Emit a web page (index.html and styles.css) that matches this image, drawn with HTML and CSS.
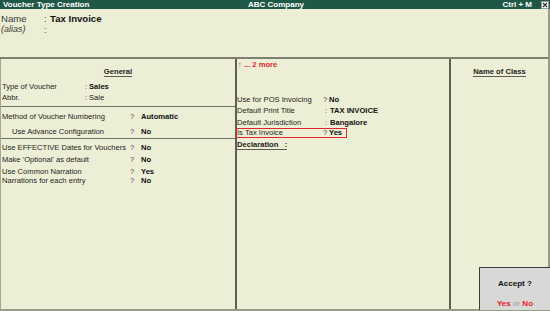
FILE: index.html
```html
<!DOCTYPE html>
<html>
<head>
<meta charset="utf-8">
<link rel="stylesheet" href="styles.css">
</head>
<body>
<div class="app">
  <div class="titlebar">
    <span class="tb-left">Voucher Type Creation</span>
    <span class="tb-center">ABC Company</span>
    <span class="tb-right">Ctrl + M
      <svg class="close" width="8" height="8" viewBox="0 0 8 8">
        <rect x="0.5" y="0.5" width="7" height="7" fill="#f4f4f4" stroke="#9a9a9a"/>
        <path d="M2 2 L6 6 M6 2 L2 6" stroke="#333" stroke-width="1.1"/>
      </svg>
    </span>
  </div>

  <div class="header">
    <div class="hrow"><span class="hlabel">Name</span><span class="hcolon">:</span><span class="hval">Tax Invoice</span></div>
    <div class="hrow"><span class="hlabel alias">(alias)</span><span class="hcolon">:</span></div>
  </div>

  <div class="main">
    <div class="col left">
      <div class="sec s1">
        <div class="caption"><span class="ul">General</span></div>
        <div class="row r-type"><span class="lbl">Type of Voucher</span><span class="sep">:</span><span class="val">Sales</span></div>
        <div class="row"><span class="lbl">Abbr.</span><span class="sep">:</span><span class="plain">Sale</span></div>
      </div>
      <div class="sec s2">
        <div class="row"><span class="lbl2">Method of Voucher Numbering</span><span class="q">?</span><span class="val">Automatic</span></div>
        <div class="row r-adv"><span class="lbl2 indent">Use Advance Configuration</span><span class="q">?</span><span class="val">No</span></div>
      </div>
      <div class="sec s3">
        <div class="row"><span class="lbl2">Use EFFECTIVE Dates for Vouchers</span><span class="q">?</span><span class="val">No</span></div>
        <div class="row r-opt"><span class="lbl2">Make 'Optional' as default</span><span class="q">?</span><span class="val">No</span></div>
        <div class="row tight r-common"><span class="lbl2">Use Common Narration</span><span class="q">?</span><span class="val">Yes</span></div>
        <div class="row tight"><span class="lbl2">Narrations for each entry</span><span class="q">?</span><span class="val">No</span></div>
      </div>
    </div>

    <div class="col mid">
      <div class="more"><span class="arrow">&#8593;</span> ... 2 more</div>
      <div class="mrows">
        <div class="mrow"><span class="mlbl">Use for POS Invoicing</span><span class="mq">?</span><span class="val">No</span></div>
        <div class="mrow"><span class="mlbl">Default Print Title</span><span class="mc">:</span><span class="val">TAX INVOICE</span></div>
        <div class="mrow"><span class="mlbl">Default Jurisdiction</span><span class="mc">:</span><span class="val">Bangalore</span></div>
        <div class="mrow istax"><span class="box"><span class="mlbl">Is Tax Invoice</span><span class="mq">?</span><span class="val">Yes</span></span></div>
        <div class="mrow"><span class="decl">Declaration&nbsp;&nbsp;&nbsp;:</span></div>
      </div>
    </div>

    <div class="col right">
      <div class="caption"><span class="ul">Name of Class</span></div>
    </div>
  </div>

  <div class="accept">
    <div class="acc-title">Accept ?</div>
    <div class="acc-opts"><span class="red">Yes</span> <span class="or">or</span> <span class="red">No</span></div>
  </div>
</div>
</body>
</html>
```

FILE: styles.css
```css
* { box-sizing: border-box; }

html, body {
  margin: 0;
  padding: 0;
  width: 550px;
  height: 311px;
  overflow: hidden;
  background: #eceed5;
}

body {
  font-family: "Liberation Sans", Arial, sans-serif;
  font-size: 7.6px;
  color: #1e1e1e;
}

.app {
  position: relative;
  width: 550px;
  height: 311px;
}

/* Title bar */
.titlebar {
  height: 9px;
  background: #1f5846;
  color: #ffffff;
  font-weight: bold;
  font-size: 8px;
  line-height: 9px;
  display: grid;
  grid-template-columns: 1fr auto 1fr;
  padding-left: 3px;
  padding-right: 1px;
}
.tb-center { text-align: center; }
.tb-right {
  display: flex;
  justify-content: flex-end;
  align-items: center;
  gap: 9px;
}
.close { display: block; }

/* Header */
.header {
  height: 50px;
  padding-top: 4px;
  border-bottom: 2px solid #7f8170;
  border-right: 2px solid #9a9c88;
}
.hrow {
  display: flex;
  height: 11px;
  line-height: 11px;
  font-size: 9.6px;
}
.hlabel {
  width: 44px;
  padding-left: 1px;
  color: #3a3a3a;
}
.alias { font-style: italic; font-size: 9px; }
.hcolon {
  width: 6px;
  color: #555;
}
.hval {
  font-weight: bold;
  color: #111;
}

/* Main */
.main {
  display: flex;
  height: 252px;
  border-bottom: 2px solid #9a9c88;
  border-left: 1px solid #a5a792;
  border-right: 2px solid #9a9c88;
}
.col { height: 100%; }
.left {
  width: 236px;
  border-right: 2px solid #5f6054;
}
.mid {
  width: 214px;
  border-right: 2px solid #5f6054;
}
.right { flex: 1; }

.caption {
  padding-top: 7px;
  line-height: 11px;
  text-align: center;
  font-weight: bold;
}
.ul {
  display: inline-block;
  line-height: 9px;
  border-bottom: 1.5px solid #5c5d52;
}

.sec { border-bottom: 1px solid #707264; }
.s1 { height: 48px; }
.s2 { height: 32px; padding-top: 4px; }
.s3 { border-bottom: none; padding-top: 3px; }

.row {
  display: flex;
  line-height: 11px;
  height: 11px;
  padding-left: 1px;
}
.r-type { margin-top: 4px; }
.r-adv { margin-top: 4px; }
.r-opt { margin-top: 1px; }
.r-common { margin-top: 2px; }
.row.tight { line-height: 9px; height: 9px; }

.lbl { width: 83px; }
.sep { width: 4px; color: #444; }
.lbl2 { width: 128px; }
.indent { padding-left: 10px; }
.q { width: 11px; color: #444; }
.val { font-weight: bold; color: #111; }
.plain { color: #222; }

/* Middle column */
.more {
  line-height: 11px;
  height: 11px;
  padding-left: 1px;
  color: #e3262b;
  font-weight: bold;
}
.arrow { font-weight: normal; }
.mrows { margin-top: 24px; }
.mrow {
  display: flex;
  align-items: center;
  height: 11.25px;
  line-height: 11.25px;
}
.mlbl { width: 86px; }
.mq { width: 6px; color: #444; }
.mc { width: 7px; color: #444; padding-left: 2px; }
.istax { height: 11.25px; }
.box {
  display: flex;
  align-items: center;
  width: 111px;
  height: 10px;
  line-height: 8px;
  margin-left: -1px;
  padding-left: 0;
  border: 1px solid #e0282c;
}
.decl {
  display: inline-block;
  font-weight: bold;
  line-height: 9px;
  margin-top: 1px;
  border-bottom: 1.5px solid #5c5d52;
}

/* Accept box (overlay) */
.accept {
  position: absolute;
  left: 479px;
  top: 267px;
  width: 71px;
  height: 43px;
  background: #d8d8d6;
  border-top: 1px solid #3c3c3c;
  border-left: 1px solid #3c3c3c;
  text-align: center;
  font-weight: bold;
}
.acc-title {
  margin-top: 11px;
  line-height: 10px;
  color: #111;
  font-size: 8px;
}
.acc-opts {
  margin-top: 10px;
  line-height: 10px;
  font-size: 8px;
}
.red { color: #e8201f; }
.or { color: #9a9a9a; font-weight: normal; }
```
